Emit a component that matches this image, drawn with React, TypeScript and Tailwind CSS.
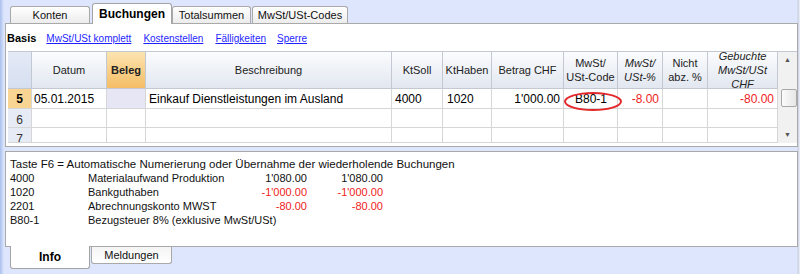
import React from "react";

function Tab({ label, active, w }: { label: string; active?: boolean; w: number }) {
  return active ? (
    <div
      style={{ width: w }}
      className="relative z-10 -mb-px flex h-[21px] items-center justify-center rounded-t-[3px] border border-b-0 border-[#a4a4a4] bg-white text-[12px] font-bold text-black"
    >
      {label}
    </div>
  ) : (
    <div
      style={{ width: w }}
      className="flex h-[17px] items-center justify-center rounded-t-[3px] border border-b-0 border-[#a9a9a9] bg-[linear-gradient(#ffffff,#ececec)] text-[11px] text-[#111]"
    >
      {label}
    </div>
  );
}

function HCell({
  children,
  italic,
  className = "",
}: {
  children?: React.ReactNode;
  italic?: boolean;
  className?: string;
}) {
  return (
    <div
      className={
        "flex items-center justify-center overflow-hidden border-b border-r border-[#c3c8d2] text-center text-[11px] leading-[14px] text-[#222] " +
        (italic ? "italic " : "") +
        (className || "bg-[linear-gradient(#fbfcfe,#e2e7f0)]")
      }
    >
      <div>{children}</div>
    </div>
  );
}

function Cell({
  children,
  className = "",
}: {
  children?: React.ReactNode;
  className?: string;
}) {
  return (
    <div
      className={
        "flex items-center overflow-hidden whitespace-nowrap border-b border-r border-[#d6d6d6] text-[12px] " +
        className
      }
    >
      {children}
    </div>
  );
}

function EmptyRow({ h, n }: { h: string; n: string }) {
  return (
    <div className={"grid grid-cols-[24px_75px_39px_246px_51px_49px_72px_54px_45px_45px_70px] " + h}>
      <Cell className="items-start justify-center bg-[#e6ebf6] pt-[2px] text-[11px] text-[#333]">{n}</Cell>
      <Cell />
      <Cell />
      <Cell />
      <Cell />
      <Cell />
      <Cell />
      <Cell />
      <Cell />
      <Cell />
      <Cell />
    </div>
  );
}

export default function App() {
  const gridCols =
    "grid grid-cols-[24px_75px_39px_246px_51px_49px_72px_54px_45px_45px_70px]";
  return (
    <div className="relative h-[274px] w-[800px] overflow-hidden bg-[linear-gradient(to_right,#a9bfec_0px,#dde6fd_4px,#dde6fd_797px,#c8cfdc_798px,#eef2fd_800px)] font-['Liberation_Sans',Arial,sans-serif] text-black">
      {/* top tabs */}
      <div className="flex h-[23px] items-end pl-[10px]">
        <Tab label="Konten" w={80} />
        <div className="w-[2px]" />
        <Tab label="Buchungen" active w={80} />
        <Tab label="Totalsummen" w={79} />
        <div className="w-px" />
        <Tab label="MwSt/USt-Codes" w={96} />
      </div>

      {/* main panel */}
      <div className="ml-[5px] h-[124px] w-[793px] border border-[#a9a9a9] bg-white">
        <div className="flex h-[27px] items-center pl-[1px] pt-[1px] text-[10px]">
          <span className="text-[11px] font-bold">Basis</span>
          <span className="ml-[10px] text-[#1f1fff] underline">MwSt/USt komplett</span>
          <span className="ml-[12px] text-[#1f1fff] underline">Kostenstellen</span>
          <span className="ml-[12px] text-[#1f1fff] underline">Fälligkeiten</span>
          <span className="ml-[11px] text-[#1f1fff] underline">Sperre</span>
        </div>

        <div className="relative ml-[2px] flex h-[92px] w-[789px] border-t border-[#c3c8d2]">
          <div className="flex w-[770px] flex-col overflow-hidden">
            {/* header */}
            <div className={gridCols + " h-[37px]"}>
              <HCell className="bg-[linear-gradient(#e4eaf6,#d6dff1)]" />
              <HCell>Datum</HCell>
              <HCell className="bg-[linear-gradient(#fce4b0,#f5bd65)] font-bold">
                Beleg
              </HCell>
              <HCell>Beschreibung</HCell>
              <HCell>KtSoll</HCell>
              <HCell>KtHaben</HCell>
              <HCell>Betrag CHF</HCell>
              <HCell>
                MwSt/
                <br />
                USt-Code
              </HCell>
              <HCell italic>
                MwSt/
                <br />
                USt-%
              </HCell>
              <HCell>
                Nicht
                <br />
                abz. %
              </HCell>
              <HCell italic>
                Gebuchte
                <br />
                MwSt/USt
                <br />
                CHF
              </HCell>
            </div>
            {/* row 5 */}
            <div className={gridCols + " h-[20px]"}>
              <Cell className="justify-center bg-[#f9d594] font-bold text-[12px]">5</Cell>
              <Cell className="pl-[2px]">05.01.2015</Cell>
              <Cell className="bg-[#e6e6f5]" />
              <Cell className="pl-[3px]">Einkauf Dienstleistungen im Ausland</Cell>
              <Cell className="pl-[3px]">4000</Cell>
              <Cell className="pl-[4px]">1020</Cell>
              <Cell className="justify-end pr-[3px]">1'000.00</Cell>
              <Cell className="pl-[11px]">B80-1</Cell>
              <Cell className="justify-end pr-[3px] text-[#f01c1c]">-8.00</Cell>
              <Cell />
              <Cell className="justify-end pr-[3px] text-[#f01c1c]">-80.00</Cell>
            </div>
            <EmptyRow h="h-[19px]" n="6" />
            <EmptyRow h="h-[15px]" n="7" />
          </div>
          {/* scrollbar */}
          <div className="flex w-[19px] flex-col items-center bg-[#f1f1f1]">
            <div className="flex h-[17px] items-center justify-center text-[7px] text-[#555]">
              ▲
            </div>
            <div className="h-[20px]" />
            <div className="ml-[2px] h-[18px] w-[16px] rounded-[2px] border border-[#a8a8a8] bg-[linear-gradient(to_right,#fbfbfb,#e6e6e6)]" />
            <div className="flex-1" />
            <div className="flex h-[16px] items-center justify-center text-[7px] text-[#555]">
              ▼
            </div>
          </div>
          {/* red ellipse highlight */}
          <div className="absolute left-[556px] top-[40px] h-[19px] w-[58px] rounded-[50%] border-2 border-[#e4282b]" />
        </div>
      </div>

      {/* info panel */}
      <div className="ml-[5px] mt-[4px] h-[96px] w-[793px] border border-[#a9a9a9] bg-white pl-[4px] pt-[5px] text-[11px] leading-[14px] text-[#111]">
        <div className="whitespace-nowrap text-[11.5px]">
          Taste F6 = Automatische Numerierung oder Übernahme der wiederholende Buchungen
        </div>
        <div className="grid grid-cols-[78px_150px_69px_76px] whitespace-nowrap">
          <div>4000</div>
          <div>Materialaufwand Produktion</div>
          <div className="text-right">1'080.00</div>
          <div className="text-right">1'080.00</div>
          <div>1020</div>
          <div>Bankguthaben</div>
          <div className="text-right text-[#f01c1c]">-1'000.00</div>
          <div className="text-right text-[#f01c1c]">-1'000.00</div>
          <div>2201</div>
          <div>Abrechnungskonto MWST</div>
          <div className="text-right text-[#f01c1c]">-80.00</div>
          <div className="text-right text-[#f01c1c]">-80.00</div>
          <div>B80-1</div>
          <div className="col-span-3">Bezugsteuer 8% (exklusive MwSt/USt)</div>
        </div>
      </div>

      {/* bottom tabs */}
      <div className="flex items-start pl-[10px]">
        <div className="relative z-10 -mt-px flex h-[23px] w-[80px] items-center justify-center rounded-b-[3px] border border-t-0 border-[#a4a4a4] bg-white text-[12px] font-bold">
          Info
        </div>
        <div className="ml-px flex h-[17px] w-[81px] items-center justify-center rounded-b-[3px] border border-t-0 border-[#a9a9a9] bg-[linear-gradient(#f4f4f4,#ffffff)] text-[11px] text-[#111]">
          Meldungen
        </div>
      </div>
    </div>
  );
}
